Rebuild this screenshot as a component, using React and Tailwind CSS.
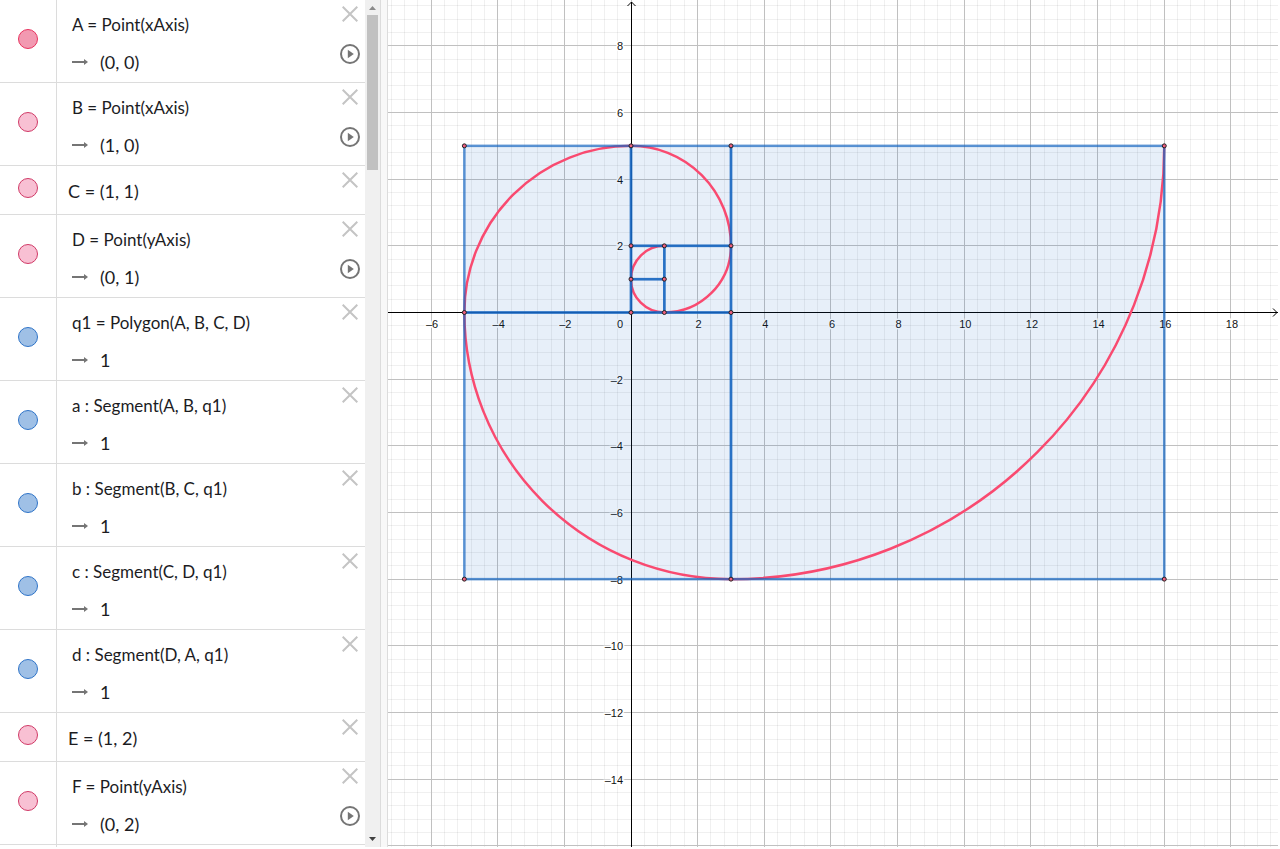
import clsx from 'clsx';

const rows = [
  { name: 'A', text: 'A = Point(xAxis)', value: '(0, 0)', kind: 'active', playable: true },
  { name: 'B', text: 'B = Point(xAxis)', value: '(1, 0)', kind: 'point', playable: true },
  { name: 'C', text: 'C = (1, 1)', kind: 'point' },
  { name: 'D', text: 'D = Point(yAxis)', value: '(0, 1)', kind: 'point', playable: true },
  { name: 'q1', text: 'q1 = Polygon(A, B, C, D)', value: '1', kind: 'shape' },
  { name: 'a', text: 'a : Segment(A, B, q1)', value: '1', kind: 'shape' },
  { name: 'b', text: 'b : Segment(B, C, q1)', value: '1', kind: 'shape' },
  { name: 'c', text: 'c : Segment(C, D, q1)', value: '1', kind: 'shape' },
  { name: 'd', text: 'd : Segment(D, A, q1)', value: '1', kind: 'shape' },
  { name: 'E', text: 'E = (1, 2)', kind: 'point' },
  { name: 'F', text: 'F = Point(yAxis)', value: '(0, 2)', kind: 'point', playable: true },
];

const marbles = {
  active: 'border-[#e8335f] bg-[#f299b1]',
  point: 'border-[#d03a67] bg-[#f8c0d3]',
  shape: 'border-[#2f74c8] bg-[#9fc0e6]',
};

// Graph coordinates: pixels per unit and the origin inside the pane
const UNIT = 33.33;
const OX = 243;
const OY = 312.5;
const px = (x) => OX + x * UNIT;
const py = (y) => OY - y * UNIT;
const snap = (v) => Math.floor(v) + 0.5;

const range = (from, to) => Array.from({ length: to - from + 1 }, (_, i) => from + i);
const label = (n) => String(n).replace('-', '–');

// Fibonacci squares: left, bottom, side
const squares = [
  [0, 0, 1],
  [0, 1, 1],
  [1, 0, 2],
  [0, 2, 3],
  [-5, 0, 5],
  [-5, -8, 8],
  [3, -8, 13],
];

// Ends of the quarter circles, each with its radius
const arcs = [
  [0, 1, 1],
  [1, 0, 1],
  [3, 2, 2],
  [0, 5, 3],
  [-5, 0, 5],
  [3, -8, 8],
  [16, 5, 13],
];

const points = [
  [0, 0], [1, 0], [1, 1], [0, 1], [1, 2], [0, 2], [3, 0], [3, 2],
  [3, 5], [0, 5], [-5, 5], [-5, 0], [-5, -8], [3, -8], [16, -8], [16, 5],
];

const spiral =
  `M${px(1)} ${py(2)}` +
  arcs.map(([x, y, r]) => `A${r * UNIT} ${r * UNIT} 0 0 0 ${px(x)} ${py(y)}`).join('');

const CloseIcon = () => (
  <svg className="size-4" viewBox="0 0 16 16" fill="none" stroke="#c4c4c4" strokeWidth="2">
    <path d="M0.7 0.7 15.3 15.3M15.3 0.7 0.7 15.3" />
  </svg>
);

const PlayIcon = () => (
  <svg className="size-5" viewBox="0 0 20 20">
    <circle cx="10" cy="10" r="9" fill="none" stroke="#757575" strokeWidth="2" />
    <path d="M7.800 5.800v8.400l6-4.200z" fill="#757575" />
  </svg>
);

const ArrowIcon = () => (
  <svg className="h-2 w-4 shrink-0" viewBox="0 0 16 8">
    <path d="M0 4h13" stroke="#757575" strokeWidth="2" />
    <path d="M12 1l4 3-4 3z" fill="#757575" />
  </svg>
);

const AlgebraRow = ({ row }) => (
  <li className="flex shrink-0 border-b border-[#dcdcdc]">
    <div className="flex w-[57px] items-center justify-center border-r border-[#dcdcdc] pb-1">
      <button
        type="button"
        aria-label={`Show or hide ${row.name}`}
        className={clsx('size-5 rounded-full border', marbles[row.kind])}
      />
    </div>
    <div
      className={clsx(
        'flex flex-1 flex-col whitespace-nowrap pt-[15px] text-[18px] leading-5',
        row.value ? 'h-[82px] gap-[17px] pl-[15px]' : 'h-12 pl-[11px]'
      )}
    >
      <p className={clsx(row.value && 'text-[17px]')}>{row.text}</p>
      {row.value && (
        <p className="flex items-center gap-3">
          <ArrowIcon />
          {row.value}
        </p>
      )}
    </div>
    <div className="flex w-[30px] flex-col items-center gap-[22px] pt-1.5">
      <button type="button" aria-label={`Delete ${row.name}`}>
        <CloseIcon />
      </button>
      {row.playable && (
        <button type="button" aria-label={`Animate ${row.name}`}>
          <PlayIcon />
        </button>
      )}
    </div>
  </li>
);

const Scrollbar = () => (
  <div className="flex w-[15px] shrink-0 flex-col items-center bg-[#f0f0f0]">
    <svg className="h-[15px] w-[15px] shrink-0" viewBox="0 0 15 15">
      <path d="M4 10h7L7.500 6z" fill="#8a8a8a" />
    </svg>
    <div className="h-[155px] w-[11px] bg-[#c1c1c1]" />
    <svg className="mt-auto h-[15px] w-[15px] shrink-0" viewBox="0 0 15 15">
      <path d="M4 5h7L7.500 9z" fill="#404040" />
    </svg>
  </div>
);

const Squares = (props) => (
  <g {...props}>
    {squares.map(([x, y, side]) => (
      <rect key={`${x},${y}`} x={px(x)} y={py(y + side)} width={side * UNIT} height={side * UNIT} />
    ))}
  </g>
);

const Graph = () => (
  <svg className="block size-full" role="img" aria-label="Fibonacci spiral">
    {/* Minor grid */}
    <g stroke="#000" strokeOpacity="0.06">
      {range(-18, 150).filter((i) => i % 5).map((i) => (
        <line key={i} x1={snap(px(i * 0.4))} x2={snap(px(i * 0.4))} y1="0" y2="100%" />
      ))}
      {range(-100, 23).filter((i) => i % 5).map((i) => (
        <line key={i} x1="0" x2="100%" y1={snap(py(i * 0.4))} y2={snap(py(i * 0.4))} />
      ))}
    </g>

    {/* Major grid */}
    <g stroke="#c0c0c0">
      {range(-3, 30).map((i) => (
        <line key={i} x1={snap(px(i * 2))} x2={snap(px(i * 2))} y1="0" y2="100%" />
      ))}
      {range(-20, 4).map((i) => (
        <line key={i} x1="0" x2="100%" y1={snap(py(i * 2))} y2={snap(py(i * 2))} />
      ))}
    </g>

    {/* Axes */}
    <g stroke="#000" fill="none">
      <line x1="0" x2="100%" y1={snap(OY)} y2={snap(OY)} />
      <line x1={snap(OX)} x2={snap(OX)} y1="2" y2="100%" />
      <path d={`M${OX - 3.5} 6l4-4 4 4`} />
      <svg x="100%" y={OY} overflow="visible">
        <path d="M-5-4l4 4-4 4" />
      </svg>
    </g>

    {/* Axis numbers */}
    <g
      className="font-['Liberation_Sans',Arial,sans-serif] text-[11px]"
      fill="#111"
      stroke="#fff"
      strokeWidth="3"
      paintOrder="stroke"
    >
      {range(-3, 9).filter((i) => i).map((i) => (
        <text key={i} x={px(i * 2) + 1} y={OY + 15.5} textAnchor="middle">
          {label(i * 2)}
        </text>
      ))}
      {range(-7, 4).filter((i) => i).map((i) => (
        <text key={i} x={OX - 8} y={Math.floor(py(i * 2)) + 5} textAnchor="end">
          {label(i * 2)}
        </text>
      ))}
      <text x={OX - 8} y={OY + 15.5} textAnchor="end">0</text>
    </g>

    {/* Spiral runs above the fills and below the edges */}
    <Squares fill="#1565c0" fillOpacity="0.1" />
    <path d={spiral} fill="none" stroke="#f94a70" strokeWidth="2.5" />
    <Squares fill="none" stroke="#1565c0" strokeOpacity="0.7" strokeWidth="2.5" />
    <g fill="#f0607f" stroke="#222" strokeWidth="1">
      {points.map(([x, y]) => (
        <circle key={`${x},${y}`} cx={px(x)} cy={py(y)} r="2" />
      ))}
    </g>
  </svg>
);

const App = () => {
  return (
    <div className="flex h-screen overflow-hidden bg-white pr-0.5 pb-0.5 font-['Lato','Open_Sans',sans-serif] text-[#1c1c1f]">
      <aside className="flex w-[381px] shrink-0 border-r border-[#dcdcdc]">
        <ul className="flex min-w-0 flex-1 flex-col overflow-hidden">
          {rows.map((row) => (
            <AlgebraRow key={row.name} row={row} />
          ))}
          <li className="w-[57px] flex-1 border-r border-[#dcdcdc]" />
        </ul>
        <Scrollbar />
      </aside>

      {/* Splitter */}
      <div className="w-[7px] shrink-0 border-r border-[#dcdcdc] bg-[#f8f8f8]" />

      <main className="min-w-0 flex-1">
        <Graph />
      </main>
    </div>
  );
};

export default App;
